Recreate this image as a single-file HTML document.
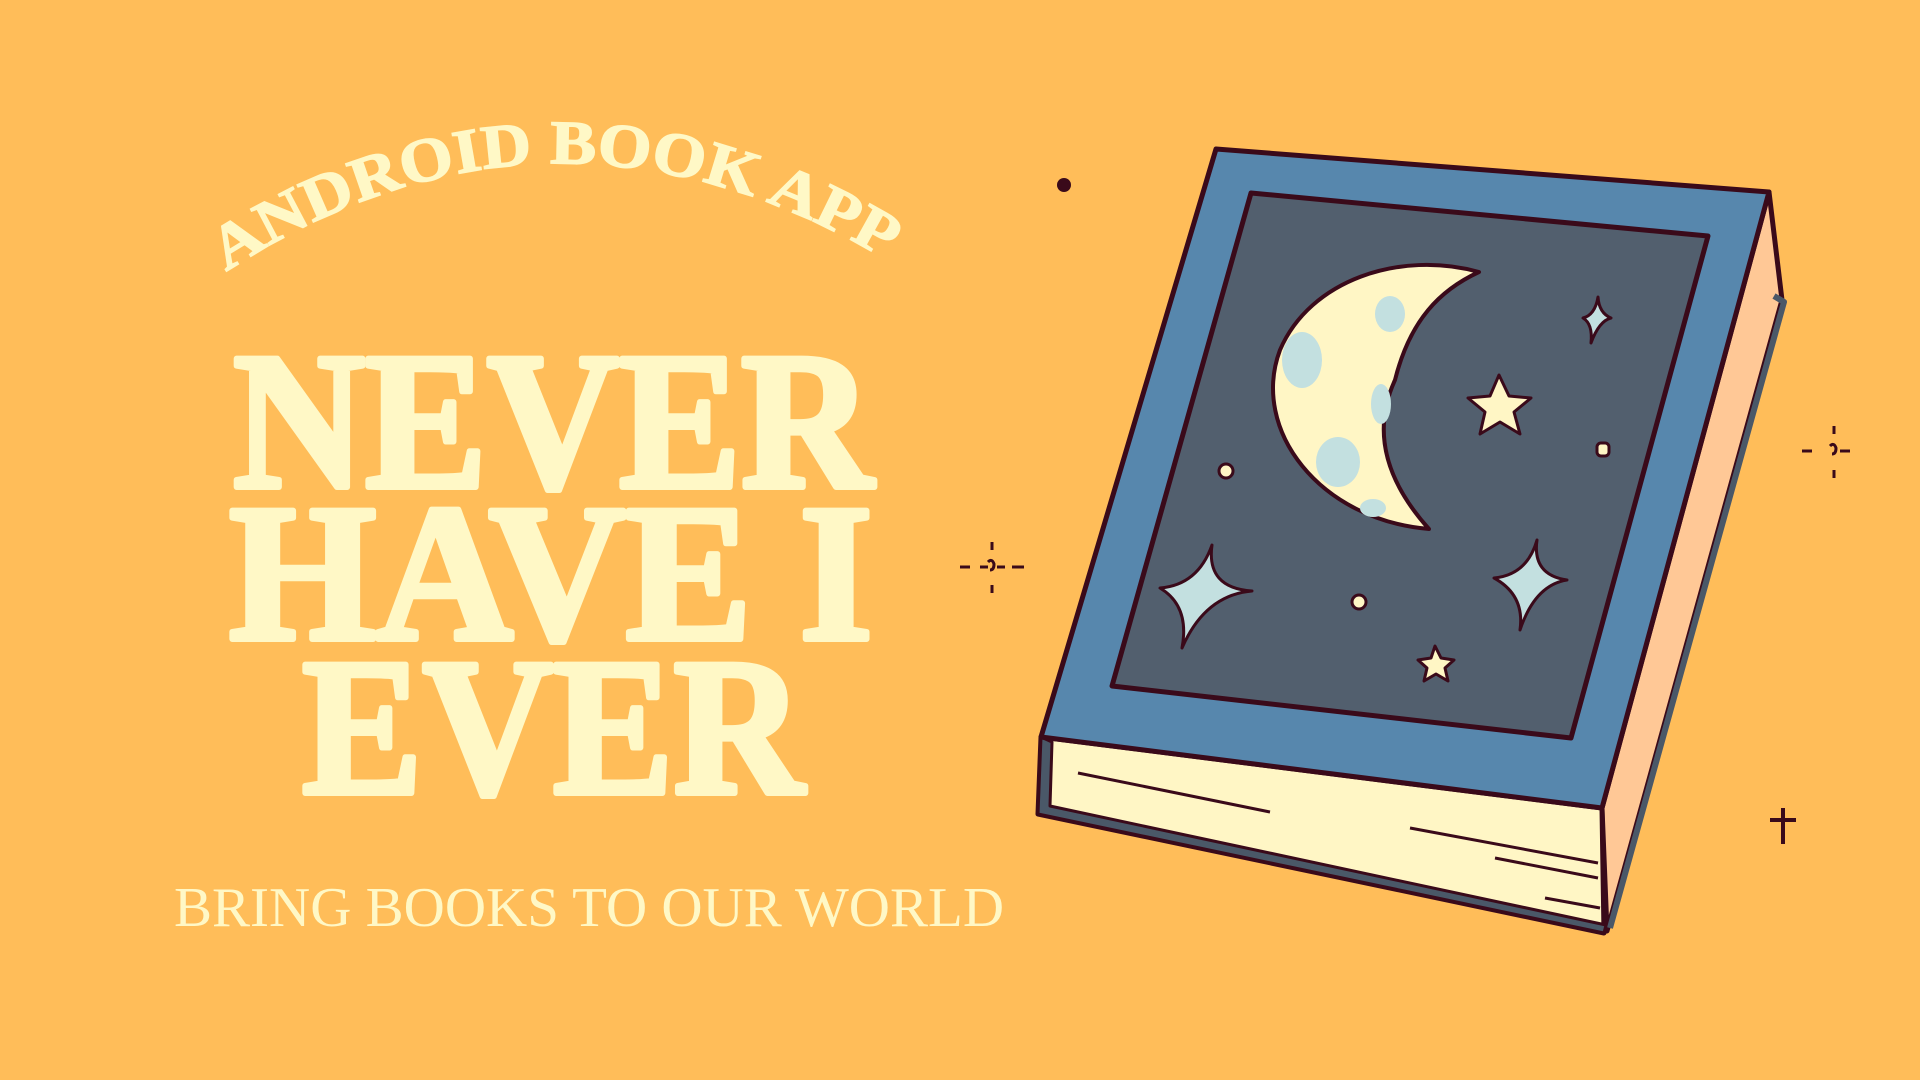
<!DOCTYPE html>
<html><head><meta charset="utf-8"><style>
html,body{margin:0;padding:0;background:#FFBD59;}
svg{display:block}
</style></head><body>
<svg width="1920" height="1080" viewBox="0 0 1920 1080" xmlns="http://www.w3.org/2000/svg">
<rect width="1920" height="1080" fill="#FFBD59"/>
<defs>
<path id="arc" d="M226,272 Q551,60 890,262"/>
</defs>
<text font-family="Liberation Serif, serif" font-weight="bold" font-size="62" fill="#FFF8C6" stroke="#FFF8C6" stroke-width="1.5">
<textPath href="#arc" textLength="700" lengthAdjust="spacingAndGlyphs">ANDROID BOOK APP</textPath></text>
<g font-family="Liberation Serif, serif" font-weight="bold" font-size="196" fill="#FFF8C6" stroke="#FFF8C6" stroke-width="6" stroke-linejoin="round" text-anchor="middle">
<text x="553" y="487" textLength="640" lengthAdjust="spacingAndGlyphs">NEVER</text>
<text x="551" y="639" textLength="644" lengthAdjust="spacingAndGlyphs">HAVE I</text>
<text x="553" y="793" textLength="502" lengthAdjust="spacingAndGlyphs">EVER</text>
</g>
<text x="174" y="926" font-family="Liberation Serif, serif" font-size="56" fill="#FFF8C6" textLength="830" lengthAdjust="spacingAndGlyphs">BRING BOOKS TO OUR WORLD</text>

<circle cx="1064" cy="185" r="7" fill="#3A0A1A"/>
<g stroke="#3A0A1A" stroke-width="3" fill="none">
<path d="M960,567h10M980,567h8M997,567h8M1012,567h12M992,542v8M992,585v8"/>
<path d="M988,562q4,-4 6,2q0,6 -4,6"/>
<path d="M1802,451h10M1840,451h10M1834,426v8M1834,470v8"/>
<path d="M1830,446q4,-4 6,2q0,6 -4,6"/>
<path d="M1783,808v36M1770,820h26" stroke-width="4"/>
</g>

<g stroke="#3A0A1A" stroke-width="5" stroke-linejoin="round">
<!-- peach side -->
<polygon points="1769,192 1782,300 1607,931 1602,808" fill="#FFC896"/>
<path d="M1774,296 1784,302 1610,928" fill="none" stroke="#4A5868" stroke-width="6"/>
<!-- pages -->
<polygon points="1041,737 1602,808 1604,933 1038,814" fill="#FFF6C5"/>
<path d="M1041,737 1038,814 1604,933 1606,925 1050,806 1052,742Z" fill="#4A5868" stroke-width="3"/>
<g stroke-width="3" fill="none">
<path d="M1078,773 1270,812"/><path d="M1410,828 1598,863"/><path d="M1495,858 1598,878"/><path d="M1545,898 1600,908"/>
</g>
<!-- cover -->
<polygon points="1216,149 1769,192 1602,808 1041,737" fill="#5787AD"/>
<polygon points="1251,193 1708,236 1571,738 1112,686" fill="#525F6E"/>
<!-- moon -->
<path d="M1479,272 C1400,250 1310,280 1280,350 C1250,430 1320,520 1429,529 C1385,480 1372,430 1395,380 C1410,320 1440,290 1479,272Z" fill="#FFF6C5" stroke-width="4"/>
</g>
<g fill="#C3E0E0">
<ellipse cx="1390" cy="314" rx="15" ry="18"/>
<ellipse cx="1302" cy="360" rx="20" ry="28"/>
<ellipse cx="1381" cy="404" rx="10" ry="20"/>
<ellipse cx="1338" cy="462" rx="22" ry="25"/>
<ellipse cx="1373" cy="508" rx="13" ry="9"/>
</g>
<g stroke="#3A0A1A" stroke-width="3" stroke-linejoin="round">
<path d="M1598,297 Q1599,313 1611,318 Q1599,321 1591,343 Q1593,324 1583,318 Q1595,315 1598,297Z" fill="#C3E0E0"/>
<path d="M1212,545 Q1206,588 1252,591 Q1205,595 1182,648 Q1190,606 1160,588 Q1198,585 1212,545Z" fill="#C3E0E0"/>
<path d="M1537,540 Q1532,575 1567,580 Q1535,585 1520,630 Q1525,595 1494,578 Q1527,575 1537,540Z" fill="#C3E0E0"/>
<path d="M1499,375 l10,21 22,2 -17,14 6,22 -20,-12 -20,12 5,-22 -17,-14 22,-2Z" fill="#FFF6C5"/>
<path d="M1435,646 l6,12 13,2 -9,8 3,13 -12,-7 -12,7 3,-13 -9,-8 13,-2Z" fill="#FFF6C5"/>
<circle cx="1226" cy="471" r="7" fill="#FFF6C5"/>
<circle cx="1359" cy="602" r="7" fill="#FFF6C5"/>
<rect x="1597" y="443" width="12" height="13" rx="4" fill="#FFF6C5"/>
</g>
</svg>
</body></html>
